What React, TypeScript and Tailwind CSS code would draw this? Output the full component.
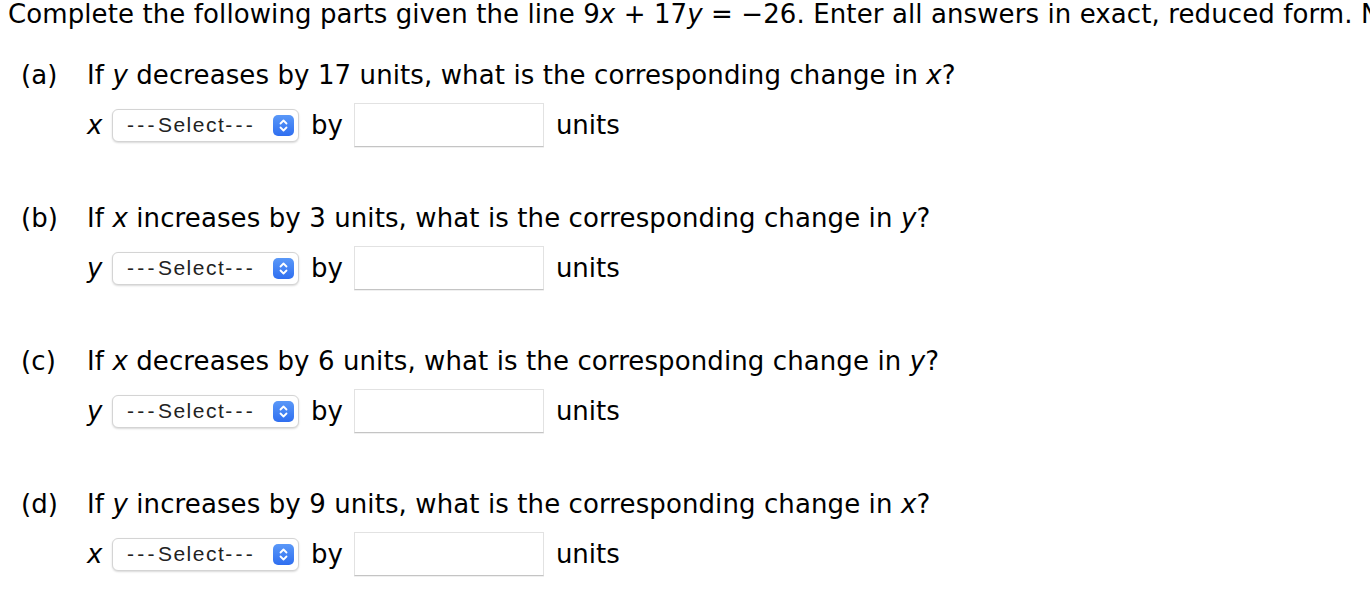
import React from "react";

const Stepper = () => (
  <div className="w-[21px] h-[21px] rounded-[5px] bg-gradient-to-b from-[#5a98f8] to-[#2f6ef0] flex items-center justify-center">
    <svg width="11" height="15" viewBox="0 0 11 15" fill="none">
      <path d="M2.5 5.5 L5.5 2.5 L8.5 5.5" stroke="white" strokeWidth="1.8" strokeLinecap="round" strokeLinejoin="round" />
      <path d="M2.5 9.5 L5.5 12.5 L8.5 9.5" stroke="white" strokeWidth="1.8" strokeLinecap="round" strokeLinejoin="round" />
    </svg>
  </div>
);

type Q = { letter: string; v1: string; verb: string; n: string; v2: string };

const qs: Q[] = [
  { letter: "a", v1: "y", verb: "decreases", n: "17", v2: "x" },
  { letter: "b", v1: "x", verb: "increases", n: "3", v2: "y" },
  { letter: "c", v1: "x", verb: "decreases", n: "6", v2: "y" },
  { letter: "d", v1: "y", verb: "increases", n: "9", v2: "x" },
];

export default function App() {
  return (
    <div className="w-[1370px] h-[610px] bg-white text-black overflow-hidden font-['DejaVu_Sans',sans-serif]">
      <div className="pl-[8px] h-[28px] leading-[28px] text-[26px] whitespace-nowrap tracking-[0.1px]">
        Complete the following parts given the line 9<i>x</i> + 17<i>y</i> = −26. Enter all answers in exact, reduced form. Note
      </div>
      <div className="mt-[32px] flex flex-col gap-[56px]">
        {qs.map((q) => (
          <div key={q.letter} className="pl-[21px]">
            <div className="flex h-[30px] leading-[30px] text-[26px] whitespace-nowrap tracking-[0.1px]">
              <span className="w-[66px]">({q.letter})</span>
              <span>
                If <i>{q.v1}</i> {q.verb} by {q.n} units, what is the corresponding change in <i>{q.v2}</i>?
              </span>
            </div>
            <div className="mt-[13px] h-[44px] flex items-center pl-[66px] text-[26px]">
              <span className="italic w-[25px]">{q.v2 === "x" ? "x" : "y"}</span>
              <div className="w-[187px] h-[33px] border border-[#d4d4d4] rounded-[6px] shadow-[0_1px_2px_rgba(0,0,0,0.15)] bg-white flex items-center justify-between pl-[14px] pr-[4px]">
                <span className="font-['Liberation_Sans',sans-serif] text-[21px] text-[#222] whitespace-nowrap">
                  <span className="tracking-[3.3px]">---</span>
                  <span className="tracking-[1.5px]">Select</span>
                  <span className="tracking-[3.3px]">---</span>
                </span>
                <Stepper />
              </div>
              <span className="ml-[12px]">by</span>
              <div className="ml-[11px] w-[190px] h-[44px] border border-[#e2e2e2] border-b-[#c4c4c4] shadow-[0_1px_0_rgba(0,0,0,0.06)] bg-white" />
              <span className="ml-[12px]">units</span>
            </div>
          </div>
        ))}
      </div>
    </div>
  );
}
